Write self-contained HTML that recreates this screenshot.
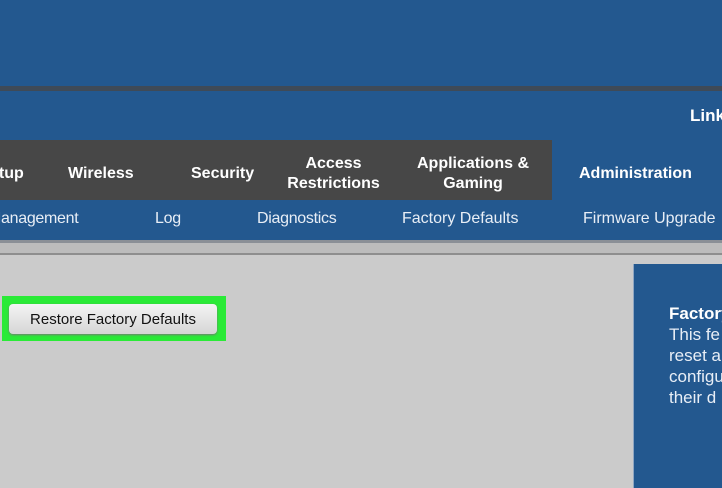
<!DOCTYPE html><html><head><style>
body{margin:0;width:722px;height:488px;overflow:hidden;background:#cbcbcb;font-family:"Liberation Sans",sans-serif;position:relative}
div{position:absolute}
.t{color:#fff;font-weight:bold;font-size:16px;text-align:center;line-height:20px}
.s{color:#e8eef6;font-size:16px;top:210px;letter-spacing:-0.3px}
</style></head><body>
<div style="left:0;top:0;width:722px;height:86px;background:#23588f"></div>
<div style="left:0;top:86px;width:722px;height:5px;background:#3f4a57"></div>
<div style="left:0;top:91px;width:722px;height:49px;background:#23588f"></div>
<div class="t" style="left:690px;top:106px;font-size:17px">Link</div>
<div style="left:0;top:140px;width:552px;height:60px;background:#474747"></div>
<div style="left:552px;top:140px;width:170px;height:60px;background:#23588f"></div>
<div style="left:0;top:200px;width:722px;height:40px;background:#23588f"></div>
<div class="t" style="left:-10px;top:164px">etup</div>
<div class="t" style="left:68px;top:164px">Wireless</div>
<div class="t" style="left:191px;top:164px">Security</div>
<div class="t" style="left:280px;top:154px;width:107px">Access<br>Restrictions</div>
<div class="t" style="left:408px;top:154px;width:130px">Applications &amp;<br>Gaming</div>
<div class="t" style="left:579px;top:164px">Administration</div>
<div class="s" style="left:-12px">Management</div>
<div class="s" style="left:155px">Log</div>
<div class="s" style="left:257px">Diagnostics</div>
<div class="s" style="left:402px;letter-spacing:0">Factory Defaults</div>
<div class="s" style="left:583px;letter-spacing:0">Firmware Upgrade</div>
<div style="left:0;top:240px;width:722px;height:3px;background:#8a8f96"></div>
<div style="left:0;top:243px;width:722px;height:10px;background:#bcbcbc"></div>
<div style="left:0;top:253px;width:722px;height:2px;background:#8e8e8e"></div>
<div style="left:633px;top:264px;width:89px;height:224px;background:#23588f;border-left:1px solid #8fa6c2"></div>
<div style="left:669px;top:303px;color:#fff;font-size:17px;line-height:21px"><b>Factory</b><br><span style="color:#e8eef6">This fe<br>reset a<br>configu<br>their d</span></div>
<div style="left:2px;top:296px;width:224px;height:45px;background:#2aea37"></div>
<div style="left:9px;top:304px;width:208px;height:30px;border-radius:4px;background:linear-gradient(#f4f4f4,#d6d6d6);box-shadow:0 1px 2px #777;font-size:15px;line-height:31px;text-align:center;color:#111">Restore Factory Defaults</div>
</body></html>
